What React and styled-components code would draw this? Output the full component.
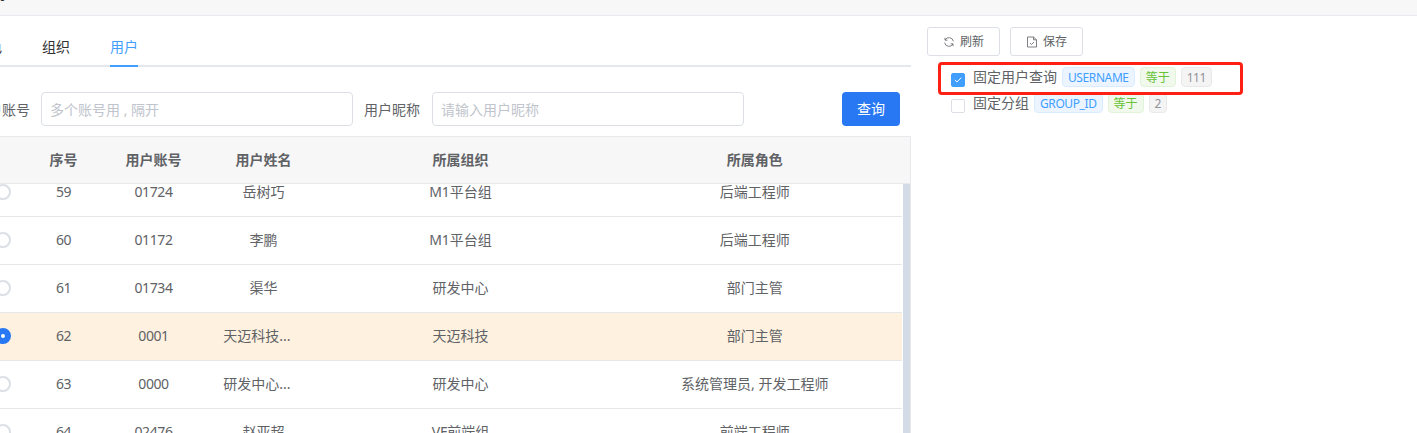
import React from "react";
import styled, { createGlobalStyle, css } from "styled-components";

const Global = createGlobalStyle`
  * { box-sizing: border-box; }
  body {
    margin: 0;
    overflow: hidden;
    background: #fff;
    color: #606266;
    font: 14px/20px "Noto Sans", "Noto Sans CJK SC", sans-serif;
  }
`;

const Page = styled.div`
  width: 1417px;
  height: 433px;
  overflow: hidden;
  display: flex;
  flex-direction: column;
`;

const TopBar = styled.header`
  height: 16px;
  flex: none;
  overflow: hidden;
  background: #f7f7f7;
  border-bottom: 1px solid #e8eaf0;
  color: #303133;
  line-height: 20px;
`;

const TopBarTitle = styled.div`
  margin: -16px 0 0 -8px;
`;

const Body = styled.main`
  flex: 1;
  min-height: 0;
  display: flex;
`;

const MainPane = styled.section`
  width: 911px;
  flex: none;
  display: flex;
  flex-direction: column;
  overflow: hidden;
`;

const Tabs = styled.nav`
  height: 51px;
  flex: none;
  display: flex;
  gap: 40px;
  margin-left: -26px;
  border-bottom: 2px solid #e4e7ed;
`;

const Tab = styled.div`
  height: 51px;
  padding-top: 21px;
  color: #303133;
  ${(p) =>
    p.$active &&
    css`
      color: #409eff;
      border-bottom: 2px solid #409eff;
    `}
`;

const SearchForm = styled.div`
  height: 69px;
  flex: none;
  display: flex;
  align-items: center;
  margin-left: -26px;
  padding: 15px 11px 0 0;
`;

const Label = styled.label`
  flex: none;
  padding-top: 1px;
  margin-right: ${(p) => p.$gap}px;
`;

const Input = styled.input`
  width: 312px;
  height: 34px;
  margin: 0 11px 0 0;
  padding: 0 8px;
  border: 1px solid #dcdfe6;
  border-radius: 4px;
  font: inherit;
  outline: none;
  &::placeholder { color: #c0c4cc; opacity: 1; }
`;

const QueryButton = styled.button`
  width: 58px;
  height: 34px;
  margin-left: auto;
  padding: 0;
  border: 0;
  border-radius: 4px;
  background: #2878f4;
  color: #fff;
  font: inherit;
`;

const Table = styled.div`
  flex: 1;
  min-height: 0;
  display: flex;
  flex-direction: column;
  border-top: 1px solid #e8e9ec;
  border-right: 1px solid #e8e9ec;
`;

const columns = css`
  display: grid;
  grid-template-columns: 18.5px 90px 90px 130px 264px 324.5px;
  align-items: center;
  text-align: center;
`;

const HeadRow = styled.div`
  ${columns}
  height: 47px;
  flex: none;
  background: #f7f7f7;
  border-bottom: 1px solid #e8e9ec;
  font-weight: 700;
`;

const Scroller = styled.div`
  flex: 1;
  min-height: 0;
  display: flex;
  overflow: hidden;
`;

const Rows = styled.div`
  width: 902px;
  flex: none;
  margin-top: -15px;
`;

const ScrollThumb = styled.div`
  width: 7px;
  margin-left: auto;
  background: #d3dce6;
`;

const Row = styled.div`
  ${columns}
  height: 48px;
  padding-bottom: 1px;
  border-bottom: 1px solid #e6e7ea;
  background: ${(p) => (p.$selected ? "#fff1df" : "#fff")};
`;

const Cell = styled.div`
  white-space: nowrap;
  letter-spacing: ${(p) => (p.$numeric ? "-0.4px" : "normal")};
  padding-right: ${(p) => (p.$shortened ? "13px" : "0")};
`;

const Radio = styled.span`
  display: block;
  width: 16px;
  height: 16px;
  margin-left: -5px;
  border-radius: 50%;
  border: ${(p) => (p.$checked ? "6px solid #2878f4" : "2px solid #dcdfe6")};
  background: #fff;
`;

const SidePane = styled.aside`
  flex: 1;
  padding: 11px 0 0 16px;
`;

const Toolbar = styled.div`
  display: flex;
  gap: 10px;
`;

const SmallButton = styled.button`
  width: 73px;
  height: 29px;
  display: flex;
  align-items: center;
  justify-content: center;
  gap: 5px;
  padding: 0;
  border: 1px solid #dcdfe6;
  border-radius: 3px;
  background: #fff;
  color: #606266;
  font: 12px/18px "Noto Sans", "Noto Sans CJK SC", sans-serif;
  svg { width: 12px; height: 12px; }
`;

const FilterList = styled.div`
  width: 305px;
  margin: 6px 0 0 11px;
`;

const FilterRow = styled.div`
  height: 26px;
  display: flex;
  align-items: flex-start;
  gap: 5px;
  padding-left: 13px;
`;

const HighlightedRow = styled.div`
  position: relative;
  height: 31px;
  padding-top: 5px;
  &::after {
    content: "";
    position: absolute;
    inset: 0 0 -2px;
    border: 3px solid #ff2014;
    border-radius: 4px;
  }
`;

const Checkbox = styled.span`
  width: 14px;
  height: 14px;
  flex: none;
  display: flex;
  margin: 6px 3px 0 0;
  border: 1px solid ${(p) => (p.$checked ? "#409eff" : "#dcdfe6")};
  border-radius: 2px;
  background: ${(p) => (p.$checked ? "#409eff" : "#fff")};
`;

const FilterName = styled.span``;

const tagColors = {
  blue: ["#ecf5ff", "#d9ecff", "#409eff"],
  green: ["#f0f9eb", "#e1f3d8", "#67c23a"],
  gray: ["#f4f4f5", "#e9e9eb", "#909399"],
};

const Tag = styled.span`
  height: 20px;
  padding: 0 5px;
  border: 1px solid ${(p) => tagColors[p.$tone][1]};
  border-radius: 4px;
  background: ${(p) => tagColors[p.$tone][0]};
  color: ${(p) => tagColors[p.$tone][2]};
  font-size: 12px;
  line-height: 19px;
  letter-spacing: ${(p) => (p.$tone === "green" ? "normal" : "-0.4px")};
`;

const RefreshIcon = () => (
  <svg viewBox="0 0 12 12" fill="none" stroke="currentColor" strokeWidth=".8">
    <path d="M2 4.2V1.8M2 4.2h2.4M2 4A4.5 4.5 0 0 1 10.4 5.4M10 7.8v2.4M10 7.8H7.6M10 8A4.5 4.5 0 0 1 1.6 6.6" />
  </svg>
);

const SaveIcon = () => (
  <svg viewBox="0 0 12 12" fill="none" stroke="currentColor" strokeWidth=".8">
    <path d="M1.5 1H7.5L10.5 3.8V11H1.5ZM7.5 1V3.8H10.5M4 7L5.5 8.5L8 6" />
  </svg>
);

const CheckIcon = () => (
  <svg width="12" height="12" viewBox="0 0 12 12" fill="none" stroke="#fff">
    <path d="M2.8 6L4.9 8L9.3 3.6" />
  </svg>
);

const users = [
  ["59", "01724", "岳树巧", "M1平台组", "后端工程师"],
  ["60", "01172", "李鹏", "M1平台组", "后端工程师"],
  ["61", "01734", "渠华", "研发中心", "部门主管"],
  ["62", "0001", "天迈科技...", "天迈科技", "部门主管"],
  ["63", "0000", "研发中心...", "研发中心", "系统管理员, 开发工程师"],
  ["64", "02476", "赵亚超", "VF前端组", "前端工程师"],
];

const Filter = ({ checked, name, field, value }) => (
  <FilterRow>
    <Checkbox $checked={checked}>{checked && <CheckIcon />}</Checkbox>
    <FilterName>{name}</FilterName>
    <Tag $tone="blue">{field}</Tag>
    <Tag $tone="green">等于</Tag>
    <Tag $tone="gray">{value}</Tag>
  </FilterRow>
);

export default function App() {
  return (
    <Page>
      <Global />
      <TopBar>
        <TopBarTitle>用</TopBarTitle>
      </TopBar>
      <Body>
        <MainPane>
          <Tabs>
            <Tab>角色</Tab>
            <Tab>组织</Tab>
            <Tab $active>用户</Tab>
          </Tabs>
          <SearchForm>
            <Label $gap={11}>用户账号</Label>
            <Input placeholder="多个账号用 , 隔开" />
            <Label $gap={12}>用户昵称</Label>
            <Input placeholder="请输入用户昵称" />
            <QueryButton>查询</QueryButton>
          </SearchForm>
          <Table>
            <HeadRow>
              <span />
              {["序号", "用户账号", "用户姓名", "所属组织", "所属角色"].map((t) => (
                <Cell key={t}>{t}</Cell>
              ))}
            </HeadRow>
            <Scroller>
              <Rows>
                {users.map((u) => (
                  <Row key={u[0]} $selected={u[0] === "62"}>
                    <Radio $checked={u[0] === "62"} />
                    {u.map((t, i) => (
                      <Cell key={i} $numeric={i < 2} $shortened={t.endsWith("...")}>{t}</Cell>
                    ))}
                  </Row>
                ))}
              </Rows>
              <ScrollThumb />
            </Scroller>
          </Table>
        </MainPane>
        <SidePane>
          <Toolbar>
            <SmallButton><RefreshIcon />刷新</SmallButton>
            <SmallButton><SaveIcon />保存</SmallButton>
          </Toolbar>
          <FilterList>
            <HighlightedRow>
              <Filter checked name="固定用户查询" field="USERNAME" value="111" />
            </HighlightedRow>
            <Filter name="固定分组" field="GROUP_ID" value="2" />
          </FilterList>
        </SidePane>
      </Body>
    </Page>
  );
}
